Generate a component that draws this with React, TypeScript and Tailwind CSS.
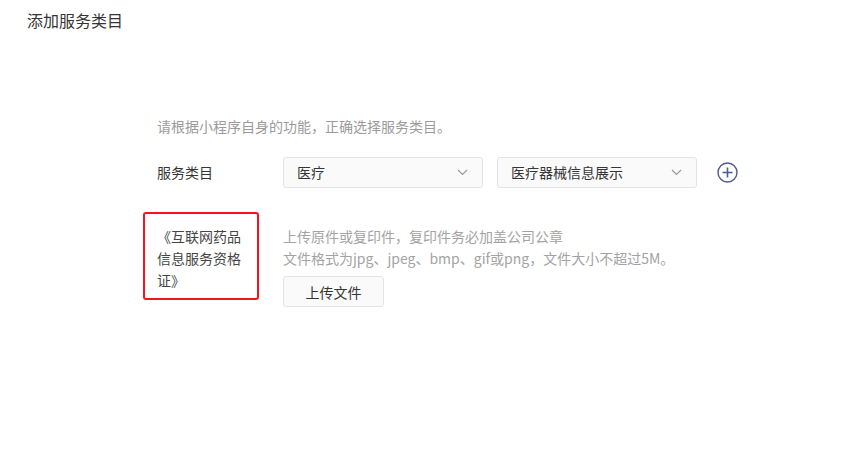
import React from "react";

const font = { fontFamily: '"Noto Sans CJK SC", "Noto Sans", sans-serif' };

function Chevron() {
    return (
        <svg width="11" height="7" viewBox="0 0 11 7" fill="none">
            <path d="M1 1l4.5 4.5L10 1" stroke="#9a9a9a" strokeWidth="1.2" />
        </svg>
    );
}

function Select({ value }: { value: string }) {
    return (
        <div className="w-[200px] h-[31px] flex items-center justify-between pl-[13px] pr-[14px] bg-[#fafafa] border border-[#e4e4e4] rounded-[3px] text-[14px] text-[#353535]">
            <span>{value}</span>
            <Chevron />
        </div>
    );
}

export default function App() {
    return (
        <div className="w-[857px] h-[464px] bg-white text-[#353535]" style={font}>
            {/* Title */}
            <div className="pt-[9px] pl-[27px] text-[16px] leading-[22px]">添加服务类目</div>

            <div className="pl-[157px] mt-[84px]">
                <p className="text-[14px] leading-[22px] text-[#9b9b9b]">
                    请根据小程序自身的功能，正确选择服务类目。
                </p>

                {/* Service category row */}
                <div className="flex items-center mt-[20px]">
                    <div className="w-[126px] text-[14px]">服务类目</div>
                    <div className="flex items-center gap-[14px]">
                        <Select value="医疗" />
                        <Select value="医疗器械信息展示" />
                    </div>
                    <svg className="ml-[20px]" width="21" height="21" viewBox="0 0 21 21" fill="none">
                        <circle cx="10.5" cy="10.5" r="9.5" stroke="#4d5b8e" strokeWidth="1.4" />
                        <path d="M10.5 5.5v10M5.5 10.5h10" stroke="#4d5b8e" strokeWidth="1.6" />
                    </svg>
                </div>

                {/* Qualification row */}
                <div className="flex mt-[37px]">
                    <div className="w-[126px]">
                        <div className="relative w-[90px] text-[14px] leading-[22px] text-[#454545]">
                            《互联网药品信息服务资格证》
                            <div className="absolute left-[-14px] top-[-13px] w-[116px] h-[88px] border-2 border-[#f5141e] rounded-[3px]" />
                        </div>
                    </div>
                    <div className="text-[14px] leading-[22px] text-[#a3a3a3]">
                        <p>上传原件或复印件，复印件务必加盖公司公章</p>
                        <p>文件格式为jpg、jpeg、bmp、gif或png，文件大小不超过5M。</p>
                        <button className="mt-[7px] w-[101px] h-[31px] bg-[#fafafa] border border-[#e4e4e4] rounded-[3px] text-[14px] text-[#353535]">
                            上传文件
                        </button>
                    </div>
                </div>
            </div>
        </div>
    );
}
